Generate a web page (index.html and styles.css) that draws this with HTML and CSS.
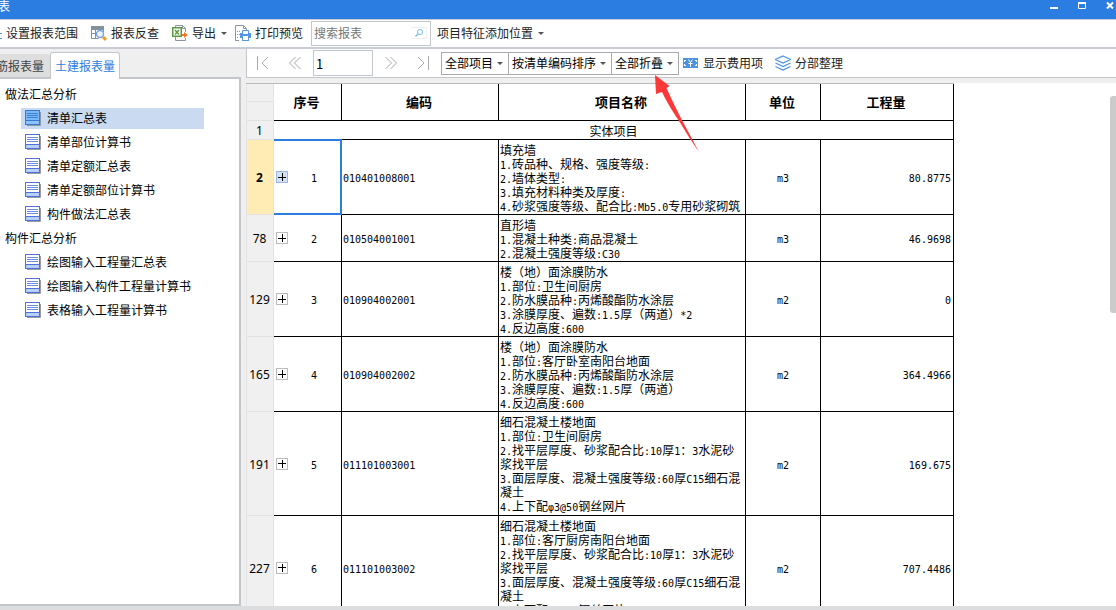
FILE: index.html
```
<!DOCTYPE html>
<html lang="zh-CN">

<head>
    <meta charset="UTF-8">
    <meta name="viewport" content="width=device-width, initial-scale=1.0">
    <title>查看报表</title>
    <link rel="stylesheet" href="styles.css">
</head>

<body>
    <svg width="0" height="0" class="sprite">
        <symbol id="doc" viewBox="0 0 16 16">
            <path d="M2 15.500h13.500V2" fill="none" stroke="#9a9aa2" />
            <rect x=".5" y=".5" width="14" height="14" fill="#fff" stroke="#4c74cc" />
            <rect x="1" y="11" width="13" height="3" fill="#b9ccfb" />
            <path d="M1 10.500h13" stroke="#4c74cc" />
            <path d="M2 3.500h11M2 5.500h11M2 7.500h11" stroke="#6b8ede" />
        </symbol>
        <symbol id="doc-on" viewBox="0 0 16 16">
            <path d="M2 15.500h13.500V2" fill="none" stroke="#8d97a8" />
            <rect x=".5" y=".5" width="14" height="14" fill="#7ab8fa" stroke="#3a78cc" />
            <rect x="1" y="11" width="13" height="3" fill="#8cc2fc" />
            <path d="M1 10.500h13" stroke="#3a78cc" />
            <path d="M2 3.500h11M2 5.500h11M2 7.500h11" stroke="#3a7fd8" />
        </symbol>
    </svg>

    <header class="titlebar">
        <span class="title">表</span>
        <div class="winbtns">
            <button type="button" aria-label="最小化"><svg width="8" height="8"><path d="M0 7h8" stroke="#fff" stroke-width="2" /></svg></button>
            <button type="button" aria-label="最大化"><svg width="8" height="8"><path d="M.5 1v6.500h7V1" fill="none" stroke="#fff" /><path d="M0 2h8" stroke="#fff" stroke-width="2" /></svg></button>
            <button type="button" aria-label="关闭"><svg width="8" height="8"><path d="M1 1.500l6 6M7 1.500l-6 6" stroke="#fff" stroke-width="2" /></svg></button>
        </div>
    </header>

    <div class="toolbar">
        <button type="button" class="tool wide">
            <svg width="2" height="16"><path d="M0 8.500h2M0 13.500h2" stroke="#5b8fd0" /></svg>设置报表范围</button>
        <button type="button" class="tool wide">
            <svg width="16" height="16" viewBox="0 0 16 16">
                <path d="M0 1h13v4H0z" fill="#84909c" />
                <path d="M.5 4v9.500h7M.5 8.500h6M4.500 4v9.500M8.500 4v2M12.500 4v3" fill="none" stroke="#84909c" />
                <circle cx="9" cy="9" r="3.500" fill="#eef5ff" stroke="#78a4ea" stroke-width="1.500" />
                <path d="M11 13l2-2 3 2.500-2 2.500z" fill="#f59a1b" />
            </svg>报表反查</button>
        <button type="button" class="tool">
            <svg width="16" height="16" viewBox="0 0 16 16">
                <path d="M3.500 2V.500h7l3 3V7M10.500.500v3h3M3.500 12v3.500h10V13" fill="none" stroke="#8b969f" />
                <rect x=".75" y="2.750" width="8.500" height="8.500" fill="#fff" stroke="#5c9a40" stroke-width="1.500" />
                <path d="M3 5l4 4.500M7 5L3 9.500" stroke="#5c9a40" stroke-width="1.500" />
                <path d="M10 9h2V7l4 3-4 3v-2h-2z" fill="#f07a28" />
            </svg>导出<i class="caret"></i></button>
        <button type="button" class="tool">
            <svg width="16" height="16" viewBox="0 0 16 16">
                <path d="M4 15.500H.500V.500h8l3 3V5M8.500.500v3h3" fill="none" stroke="#8b969f" />
                <path d="M2 6.500h3M2 9.500h3M2 12.500h2" stroke="#8b969f" stroke-dasharray="1 1" />
                <rect x="5" y="8" width="11" height="5" fill="#5598e6" />
                <path d="M7.500 9V5.500h6V9" fill="#fff" stroke="#5598e6" />
                <rect x="7.500" y="10.500" width="6" height="5" fill="#fff" stroke="#5598e6" />
            </svg>打印预览</button>
        <label class="search">
            <input type="text" placeholder="搜索报表" aria-label="搜索报表">
            <svg width="16" height="12" viewBox="0 0 16 12">
                <path d="M0 .500h15.500v11H0" fill="none" stroke="#eee" />
                <circle cx="9" cy="5" r="2.500" fill="none" stroke="#76baf0" />
                <path d="M7 7l-2.500 2.500" stroke="#76baf0" stroke-width="1.500" />
            </svg>
        </label>
        <button type="button" class="tool">项目特征添加位置<i class="caret"></i></button>
    </div>

    <main class="main">
        <aside class="side">
            <nav class="tabs">
                <button type="button" class="tab"><span>钢筋报表量</span></button>
                <button type="button" class="tab active">土建报表量</button>
            </nav>
            <div class="tree">
                <div class="group">做法汇总分析</div>
                <a href="#" class="item on"><svg width="16" height="16"><use href="#doc-on" /></svg>清单汇总表</a>
                <a href="#" class="item"><svg width="16" height="16"><use href="#doc" /></svg>清单部位计算书</a>
                <a href="#" class="item"><svg width="16" height="16"><use href="#doc" /></svg>清单定额汇总表</a>
                <a href="#" class="item"><svg width="16" height="16"><use href="#doc" /></svg>清单定额部位计算书</a>
                <a href="#" class="item"><svg width="16" height="16"><use href="#doc" /></svg>构件做法汇总表</a>
                <div class="group">构件汇总分析</div>
                <a href="#" class="item"><svg width="16" height="16"><use href="#doc" /></svg>绘图输入工程量汇总表</a>
                <a href="#" class="item"><svg width="16" height="16"><use href="#doc" /></svg>绘图输入构件工程量计算书</a>
                <a href="#" class="item"><svg width="16" height="16"><use href="#doc" /></svg>表格输入工程量计算书</a>
            </div>
        </aside>

        <section class="content">
            <div class="pager">
                <button type="button" class="page" aria-label="首页"><svg width="14" height="14"><path d="M1.500 0v14M12 1L6 7l6 6" /></svg></button>
                <button type="button" class="page" aria-label="上一页"><svg width="14" height="14"><path d="M7.500 1l-6 6 6 6M12.500 1l-6 6 6 6" /></svg></button>
                <input type="text" class="num" value="1" aria-label="页码">
                <button type="button" class="page" aria-label="下一页"><svg width="14" height="14"><path d="M1.500 1l6 6-6 6M6.500 1l6 6-6 6" /></svg></button>
                <button type="button" class="page" aria-label="末页"><svg width="14" height="14"><path d="M2 1l6 6-6 6M12.500 0v14" /></svg></button>
                <div class="selects">
                    <div class="select"><select aria-label="项目范围"><option>全部项目</option></select><i class="caret"></i></div>
                    <div class="select"><select aria-label="排序"><option>按清单编码排序</option></select><i class="caret"></i></div>
                    <div class="select"><select aria-label="折叠"><option>全部折叠</option></select><i class="caret"></i>
                        <svg class="arrow" width="46" height="78" viewBox="0 0 46 78">
                            <path d="M0 0l14.500 11-3 2Q20 32 28 47L44 77Q34 63 26 49 13 30 7 17L1 19z" fill="#fc3838" />
                        </svg>
                    </div>
                </div>
                <button type="button" class="tool">
                    <svg width="16" height="16" viewBox="0 0 16 16">
                        <rect x="0" y="3" width="15" height="10" fill="#4a93e4" />
                        <path d="M1 5h2v1H2v1H1zM14 5h-2v1h1v1h1zM1 11h2v-1H2V9H1zM14 11h-2v-1h1V9h1z" fill="#fff" />
                        <path d="M5.500 4.500l2 3 2-3M7.500 7v5M5.500 8.500h4" fill="none" stroke="#fff" />
                    </svg>显示费用项</button>
                <button type="button" class="tool">
                    <svg width="16" height="16" viewBox="0 0 16 16">
                        <path d="M8 1l7.500 3.500L8 8 .5 4.500zM.500 8L8 11.500 15.500 8M.500 11.500L8 15l7.500-3.500" fill="none" stroke="#4a93e4" stroke-width="1.200" />
                    </svg>分部整理</button>
            </div>

            <div class="sheet">
                <table>
                    <colgroup>
                        <col class="c-row"><col class="c-no"><col class="c-code"><col class="c-name"><col class="c-unit"><col class="c-qty">
                    </colgroup>
                    <thead>
                        <tr class="h1">
                            <td class="rowno"></td>
                            <th rowspan="2">序号</th>
                            <th rowspan="2">编码</th>
                            <th rowspan="2">项目名称</th>
                            <th rowspan="2">单位</th>
                            <th rowspan="2">工程量</th>
                        </tr>
                        <tr class="h2">
                            <td class="rowno"></td>
                        </tr>
                    </thead>
                    <tbody>
                        <tr class="section">
                            <td class="rowno">1</td>
                            <td colspan="5">实体项目</td>
                        </tr>
                        <tr class="current">
                            <td class="rowno">2</td>
                            <td class="seq"><div><button type="button" class="plus" aria-label="展开"></button><span>1</span></div></td>
                            <td class="code">010401008001</td>
                            <td class="name">填充墙<br><span>1.</span>砖品种、规格、强度等级<span>:</span><br><span>2.</span>墙体类型<span>:</span><br><span>3.</span>填充材料种类及厚度<span>:</span><br><span>4.</span>砂浆强度等级、配合比<span>:Mb5.0</span>专用砂浆砌筑</td>
                            <td class="unit">m3</td>
                            <td class="qty">80.8775</td>
                        </tr>
                        <tr>
                            <td class="rowno">78</td>
                            <td class="seq"><div><button type="button" class="plus" aria-label="展开"></button><span>2</span></div></td>
                            <td class="code">010504001001</td>
                            <td class="name">直形墙<br><span>1.</span>混凝土种类<span>:</span>商品混凝土<br><span>2.</span>混凝土强度等级<span>:C30</span></td>
                            <td class="unit">m3</td>
                            <td class="qty">46.9698</td>
                        </tr>
                        <tr>
                            <td class="rowno">129</td>
                            <td class="seq"><div><button type="button" class="plus" aria-label="展开"></button><span>3</span></div></td>
                            <td class="code">010904002001</td>
                            <td class="name">楼（地）面涂膜防水<br><span>1.</span>部位<span>:</span>卫生间厨房<br><span>2.</span>防水膜品种<span>:</span>丙烯酸酯防水涂层<br><span>3.</span>涂膜厚度、遍数<span>:1.5</span>厚（两道）<span>*2</span><br><span>4.</span>反边高度<span>:600</span></td>
                            <td class="unit">m2</td>
                            <td class="qty">0</td>
                        </tr>
                        <tr>
                            <td class="rowno">165</td>
                            <td class="seq"><div><button type="button" class="plus" aria-label="展开"></button><span>4</span></div></td>
                            <td class="code">010904002002</td>
                            <td class="name">楼（地）面涂膜防水<br><span>1.</span>部位<span>:</span>客厅卧室南阳台地面<br><span>2.</span>防水膜品种<span>:</span>丙烯酸酯防水涂层<br><span>3.</span>涂膜厚度、遍数<span>:1.5</span>厚（两道）<br><span>4.</span>反边高度<span>:600</span></td>
                            <td class="unit">m2</td>
                            <td class="qty">364.4966</td>
                        </tr>
                        <tr class="tall">
                            <td class="rowno">191</td>
                            <td class="seq"><div><button type="button" class="plus" aria-label="展开"></button><span>5</span></div></td>
                            <td class="code">011101003001</td>
                            <td class="name">细石混凝土楼地面<br><span>1.</span>部位<span>:</span>卫生间厨房<br><span>2.</span>找平层厚度、砂浆配合比<span>:10</span>厚<span>1</span>：<span>3</span>水泥砂浆找平层<br><span>3.</span>面层厚度、混凝土强度等级<span>:60</span>厚<span>C15</span>细石混凝土<br><span>4.</span>上下配<span>φ3@50</span>钢丝网片</td>
                            <td class="unit">m2</td>
                            <td class="qty">169.675</td>
                        </tr>
                        <tr class="tall">
                            <td class="rowno">227</td>
                            <td class="seq"><div><button type="button" class="plus" aria-label="展开"></button><span>6</span></div></td>
                            <td class="code">011101003002</td>
                            <td class="name">细石混凝土楼地面<br><span>1.</span>部位<span>:</span>客厅厨房南阳台地面<br><span>2.</span>找平层厚度、砂浆配合比<span>:10</span>厚<span>1</span>：<span>3</span>水泥砂浆找平层<br><span>3.</span>面层厚度、混凝土强度等级<span>:60</span>厚<span>C15</span>细石混凝土<br><span>4.</span>上下配<span>φ3@50</span>钢丝网片</td>
                            <td class="unit">m2</td>
                            <td class="qty">707.4486</td>
                        </tr>
                    </tbody>
                </table>
                <div class="track"><div class="thumb"></div></div>
            </div>
        </section>
    </main>
    <footer class="status"></footer>
</body>

</html>
```
FILE: styles.css
```
* {
    box-sizing: border-box;
}

body {
    display: flex;
    flex-direction: column;
    height: 100vh;
    margin: 0;
    overflow: hidden;
    background: #efefef;
    color: #000;
    font: 12px/16px "Noto Sans CJK SC", sans-serif;
}

button, input, select {
    font: inherit;
    color: inherit;
}

button {
    display: flex;
    align-items: center;
    padding: 0;
    border: 0;
    background: none;
    white-space: nowrap;
}

svg {
    display: block;
    flex: none;
}

.sprite {
    position: absolute;
}

.caret {
    border: 3px solid transparent;
    border-top-color: #555;
    border-bottom: 0;
}

/* 标题栏 */
.titlebar {
    display: flex;
    flex: none;
    justify-content: space-between;
    height: 19px;
    background: #2b7de1;
    color: #fff;
}

.title {
    line-height: 12px;
    margin-left: -2px;
}

.winbtns {
    display: flex;
    align-items: flex-start;
    gap: 20px;
    padding: 1px 2px 0 0;
}

/* 工具栏 */
.toolbar {
    display: flex;
    flex: none;
    align-items: center;
    height: 30px;
    padding-bottom: 1px;
    border-top: 1px solid #c8ccd2;
    border-bottom: 2px solid #c8ccd2;
    background: #fff;
}

.tool {
    gap: 4px;
    margin-right: 8px;
    color: #222;
}

.tool.wide {
    margin-right: 13px;
}

.tool .caret {
    margin-left: 1px;
}

.search {
    display: flex;
    align-items: center;
    width: 120px;
    height: 25px;
    margin-right: 6px;
    padding: 0 3px 0 2px;
    border: 1px solid #c3c7cc;
}

.search input {
    flex: 1;
    min-width: 0;
    padding: 0;
    border: 0;
    outline: 0;
}

.search input::placeholder {
    color: #777;
}

/* 左侧 */
.main {
    display: flex;
    flex: 1;
    min-height: 0;
}

.side {
    display: flex;
    flex: none;
    flex-direction: column;
    width: 241px;
    margin-right: 5px;
}

.tabs {
    display: flex;
    align-items: flex-end;
    height: 28px;
}

.tab {
    justify-content: flex-end;
    width: 50px;
    height: 23px;
    padding: 0 6px;
    overflow: hidden;
    border-radius: 0 3px 0 0;
    background: #dedede;
    color: #444;
}

.tab.active {
    position: relative;
    width: 70px;
    height: 27px;
    padding: 0 4px;
    margin-bottom: -2px;
    border: 1px solid #c3c7cc;
    border-bottom: 0;
    border-radius: 3px 3px 0 0;
    background: #fff;
    color: #2b7de1;
}

.tree {
    flex: 1;
    display: flex;
    flex-direction: column;
    gap: 3px;
    padding: 5px 0 0 5px;
    border: 2px solid #c3c7cc;
    border-left: 0;
    background: #fff;
}

.group, .item {
    height: 21px;
    line-height: 20px;
}

.item {
    display: flex;
    align-items: center;
    gap: 6px;
    width: 183px;
    margin-left: 16px;
    padding: 0 0 1px 4px;
    color: #000;
    text-decoration: none;
}

.item.on {
    background: #c9daf1;
}

/* 右侧 */
.content {
    display: flex;
    flex: 1;
    flex-direction: column;
    min-width: 0;
}

.pager {
    display: flex;
    flex: none;
    align-items: center;
    gap: 4px;
    height: 29px;
    padding-left: 2px;
    border-left: 1px solid #c3c7cc;
    border-bottom: 1px solid #c3c7cc;
    background: #fff;
}

.page {
    justify-content: center;
    width: 28px;
}

.page path {
    fill: none;
    stroke: #aaa;
}

.num {
    width: 60px;
    height: 26px;
    padding: 0 2px;
    border: 1px solid #c3c7cc;
    font-size: 13px;
}

.selects {
    display: flex;
    margin-right: 1px;
}

.select {
    display: flex;
    align-items: center;
    position: relative;
    height: 23px;
    margin-right: -1px;
    padding-right: 5px;
    border: 1px solid #aaa;
    background: #fff;
}

.select select {
    appearance: none;
    padding: 0 3px;
    border: 0;
    background: none;
}

.arrow {
    position: absolute;
    z-index: 2;
    left: 43px;
    top: 22px;
    pointer-events: none;
}

/* 报表 */
.sheet {
    display: flex;
    flex: 1;
    justify-content: space-between;
    align-items: flex-start;
    min-height: 0;
    margin-top: 5px;
    overflow: hidden;
    background: #fff;
}

table {
    flex: none;
    table-layout: fixed;
    width: 708px;
    border-collapse: separate;
    border-spacing: 0;
    border-top: 1px solid #bbb;
}

.c-row { width: 28px; }
.c-no { width: 68px; }
.c-code { width: 157px; }
.c-name { width: 247px; }
.c-unit { width: 75px; }
.c-qty { width: 133px; }

th, td {
    padding: 3px 1px 1px;
    border-right: 1px solid #000;
    border-bottom: 1px solid #000;
    line-height: 14px;
}

th {
    padding: 0 2px 1px 0;
    font-size: 13px;
}

.rowno {
    padding: 2px 1px 0 0;
    border: 1px solid #e3e3e3;
    border-top: 0;
    background: #f0f0f0;
    font: 12px/16px "Noto Sans", sans-serif;
    text-align: center;
}

.h1 { height: 18px; }
.h2 { height: 19px; }
.section { height: 19px; }
.tall { height: 104px; }

.section td {
    padding-top: 1px;
    padding-bottom: 0;
    text-align: center;
}

.current .rowno {
    background: #ffebb3;
    font-weight: bold;
}

.seq, .code, .unit, .qty, .name span {
    font-family: "DejaVu Sans Mono", monospace;
    font-size: 10px;
}

.seq, .code, .unit, .qty {
    padding-top: 5px;
}

.name span {
    line-height: 10px;
}

.seq div {
    display: flex;
    align-items: flex-start;
    padding-left: 1px;
}

.seq span {
    flex: 1;
    line-height: 16px;
    text-align: center;
}

.current .seq {
    position: relative;
}

.current .seq::after {
    content: "";
    position: absolute;
    inset: -1px -1px -1px 0;
    border: 2px solid #2b7de1;
    border-left: 0;
    pointer-events: none;
}

.plus {
    width: 12px;
    height: 12px;
    border: 1px solid #bbb;
    background:
        linear-gradient(#000, #000) center / 8px 1px no-repeat,
        linear-gradient(#000, #000) center / 1px 8px no-repeat,
        #fff;
}

.current .plus {
    border-color: #9db4dc;
    background-color: #d5e1f4;
}

.name {
    vertical-align: top;
    word-break: break-all;
}

.unit {
    text-align: center;
}

.qty {
    padding-right: 2px;
    text-align: right;
}

.track {
    width: 6px;
    padding-top: 13px;
}

.thumb {
    height: 217px;
    border-radius: 3px 0 0 3px;
    background: #cbcbcb;
}

.status {
    flex: none;
    height: 4px;
    background: #dcdddf;
}
```
